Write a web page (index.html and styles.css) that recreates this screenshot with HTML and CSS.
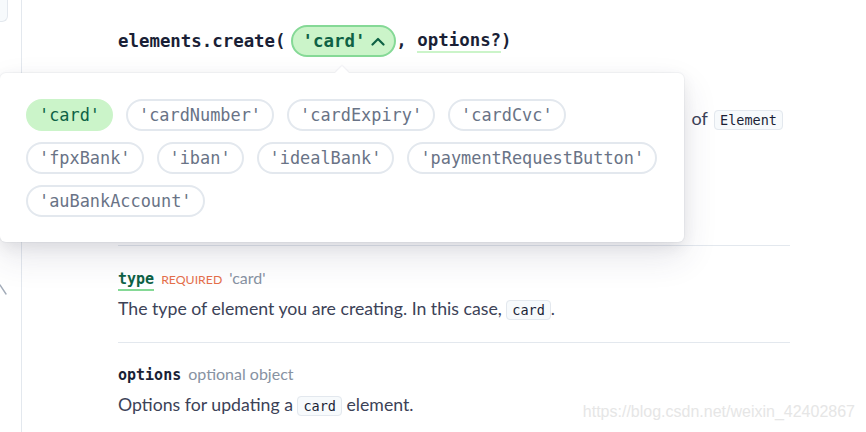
FILE: index.html
```html
<!DOCTYPE html>
<html lang="en">
<head>
<meta charset="utf-8">
<title>elements.create</title>
<link rel="stylesheet" href="styles.css">
</head>
<body>
<div class="page">
  <aside class="gutter">
    <div class="gutter-tab"></div>
    <svg class="gutter-chevron" width="8" height="12" viewBox="0 0 8 12"><path d="M0 1 L6 10" fill="none" stroke="#a3acb9" stroke-width="1.4" stroke-linecap="round"/></svg>
  </aside>
  <main class="main">
    <div class="signature">
      <span class="fn">elements.create(</span>
      <span class="arg-pill">'card'<svg class="pill-chev" width="14" height="9" viewBox="0 0 14 9"><path d="M1.5 7.5 L7 2 L12.5 7.5" fill="none" stroke="#0e6245" stroke-width="2.2" stroke-linecap="round" stroke-linejoin="round"/></svg></span>
      <span class="fn">, </span>
      <span class="fn opt">options?</span><span class="fn">)</span>
    </div>
    <div class="intro">
      <p class="intro-line">Use this method to create an instance<span class="intro-tail">of <code class="code">Element</code></span></p>
      <p class="intro-rest">It takes the type and an options object.</p>
    </div>
    <section class="param">
      <div class="param-head">
        <span class="param-name req">type</span>
        <span class="param-flag">REQUIRED</span>
        <span class="param-type">'card'</span>
      </div>
      <p class="param-desc">The type of element you are creating. In this case, <code class="code">card</code>.</p>
    </section>
    <section class="param">
      <div class="param-head">
        <span class="param-name">options</span>
        <span class="param-type">optional object</span>
      </div>
      <p class="param-desc">Options for updating a <code class="code">card</code> element.</p>
    </section>
  </main>
</div>
<div class="popover">
  <span class="chip active">'card'</span>
  <span class="chip">'cardNumber'</span>
  <span class="chip">'cardExpiry'</span>
  <span class="chip">'cardCvc'</span>
  <span class="chip">'fpxBank'</span>
  <span class="chip">'iban'</span>
  <span class="chip">'idealBank'</span>
  <span class="chip">'paymentRequestButton'</span>
  <span class="chip">'auBankAccount'</span>
</div>
<div class="watermark">https://blog.csdn.net/weixin_42402867</div>
</body>
</html>
```
FILE: styles.css
```css
* { box-sizing: border-box; }
html, body { margin: 0; padding: 0; background: #fff; }
body {
  position: relative;
  width: 866px;
  height: 432px;
  overflow: hidden;
  font-family: Lato, "Open Sans", sans-serif;
  color: #3c4257;
}
.page { display: flex; height: 432px; }
.gutter {
  width: 22px;
  flex: none;
  border-right: 1px solid #e3e8ee;
  display: flex;
  flex-direction: column;
}
.gutter-tab {
  width: 8px;
  height: 22px;
  border-right: 1px solid #e3e8ee;
  border-bottom: 1px solid #e3e8ee;
  border-bottom-right-radius: 6px;
  background: #f7fafc;
}
.gutter-chevron { margin-top: 262px; display: block; }
.main { margin-left: 96px; width: 672px; flex: none; }

.signature {
  display: flex;
  align-items: center;
  height: 32px;
  margin-top: 25px;
  font-family: "DejaVu Sans Mono", monospace;
  font-weight: bold;
  font-size: 17.4px;
  color: #1a1f36;
  white-space: pre;
}
.arg-pill {
  display: flex;
  align-items: center;
  gap: 6px;
  height: 32px;
  padding: 0 9px 0 10px;
  margin-left: 5px;
  border: 2px solid #85d996;
  background: #cbf4c9;
  color: #0e6245;
  border-radius: 16px;
}
.pill-chev { display: block; }
.opt {
  line-height: 20px;
  border-bottom: 2px solid #cbf4c9;
  padding-bottom: 1px;
}

.intro { height: 188px; padding-top: 48px; }
.intro-line {
  margin: 0 7px 0 0;
  font-size: 18px;
  line-height: 26px;
  text-align: right;
  white-space: nowrap;
}
.intro-tail { margin-left: 10px; word-spacing: 2px; }
.intro-rest {
  margin: 0;
  font-size: 18px;
  line-height: 26px;
}
.code {
  font-family: "DejaVu Sans Mono", monospace;
  font-size: 13.5px;
  color: #1a1f36;
  background: #f7fafc;
  border: 1px solid #e3e8ee;
  border-radius: 4px;
  padding: 1px 5px;
  word-spacing: 0;
}

.param {
  border-top: 1px solid #e3e8ee;
  padding: 22px 0 20px;
}
.param + .param { padding-top: 21px; }
.param-head {
  display: flex;
  align-items: baseline;
  gap: 7px;
  height: 20px;
}
.param-name {
  font-family: "DejaVu Sans Mono", monospace;
  font-weight: bold;
  font-size: 15px;
  line-height: 20px;
  color: #1a1f36;
}
.param-name.req {
  color: #0e6245;
  border-bottom: 2px solid #85d996;
  line-height: 19px;
}
.param-flag {
  font-size: 12.3px;
  color: #e56f4a;
}
.param-type {
  font-size: 16px;
  color: #8792a2;
}
.param-desc {
  margin: 9px 0 0;
  font-size: 17.7px;
  line-height: 24px;
}

.popover {
  position: absolute;
  left: 0;
  top: 73px;
  width: 684px;
  padding: 26px 20px 25px 26px;
  background: #fff;
  border-radius: 6px;
  box-shadow: 0 0 0 1px rgba(136, 152, 170, 0.08), 0 15px 35px rgba(49, 49, 93, 0.12), 0 5px 15px rgba(0, 0, 0, 0.07);
  display: flex;
  flex-wrap: wrap;
  gap: 11px 13px;
}
.popover::before {
  content: "";
  position: absolute;
  left: 337px;
  top: -5px;
  width: 10px;
  height: 10px;
  background: #fff;
  transform: rotate(45deg);
  box-shadow: -1px -1px 1px rgba(49, 49, 93, 0.05);
}
.chip {
  display: flex;
  align-items: center;
  height: 32px;
  padding: 0 11px;
  border: 2px solid #e3e8ee;
  border-radius: 16px;
  font-family: "DejaVu Sans Mono", monospace;
  font-size: 16.9px;
  color: #697386;
  background: #fff;
  white-space: pre;
}
.chip.active {
  background: #cbf4c9;
  border-color: #cbf4c9;
  color: #0e6245;
}

.watermark {
  position: absolute;
  right: 11px;
  top: 403px;
  font-family: "Liberation Sans", Arial, sans-serif;
  font-size: 16px;
  color: #e6e6e6;
  white-space: nowrap;
}
```
